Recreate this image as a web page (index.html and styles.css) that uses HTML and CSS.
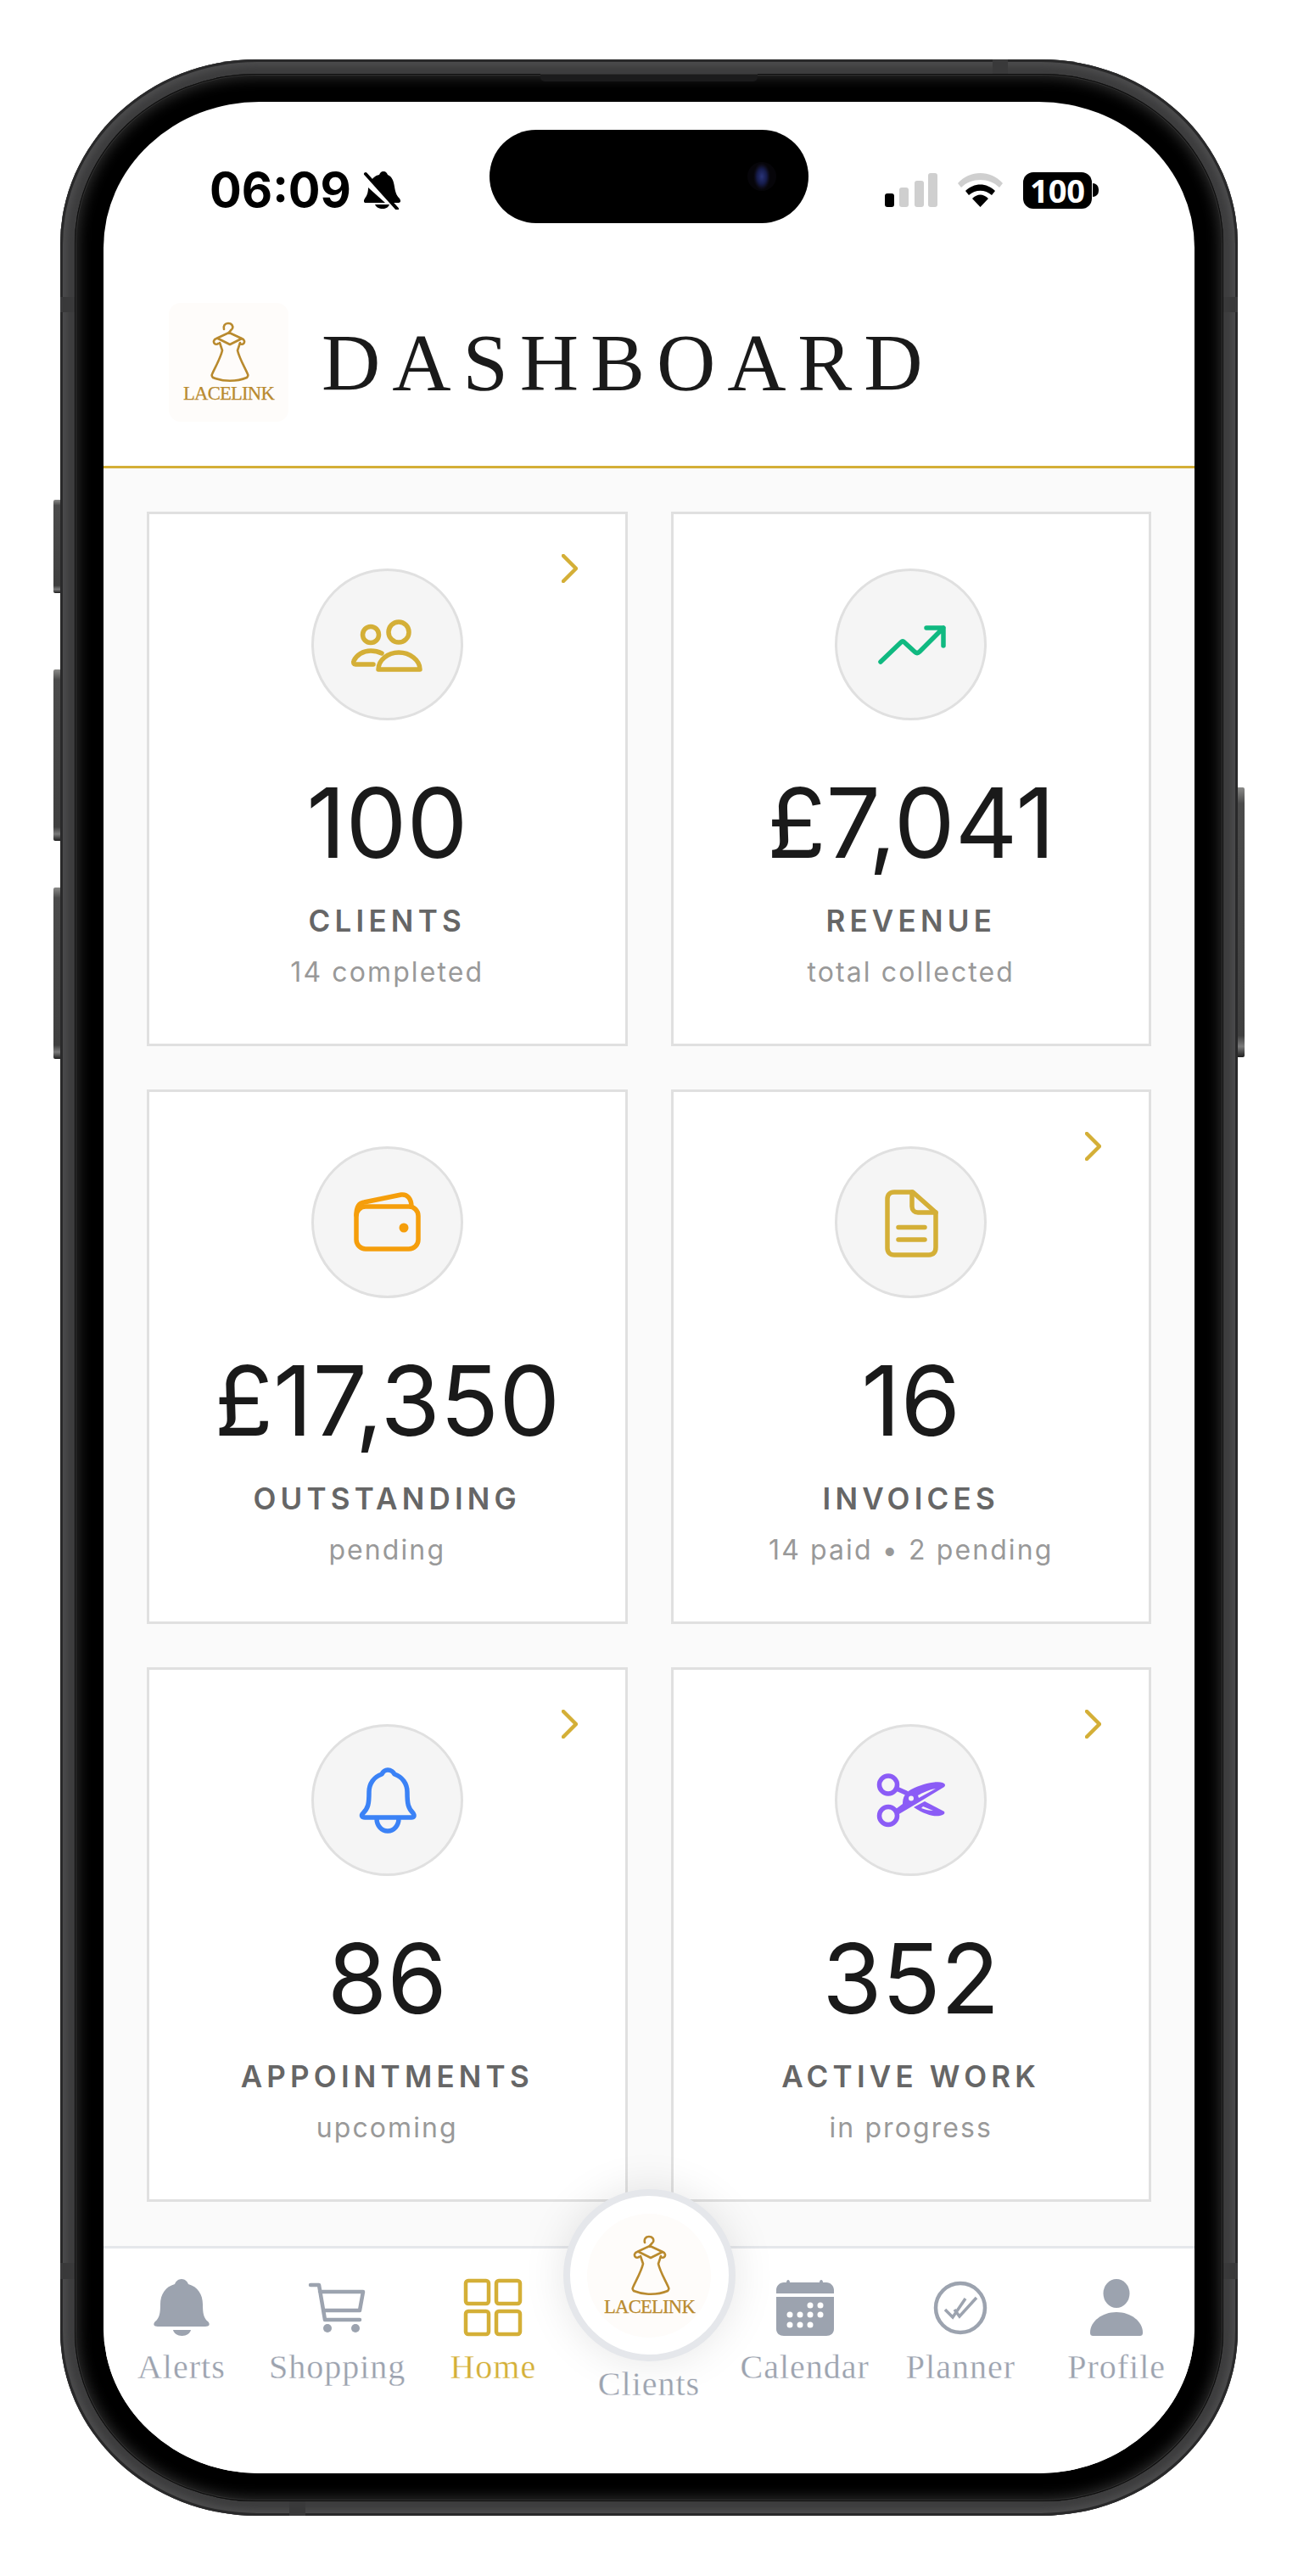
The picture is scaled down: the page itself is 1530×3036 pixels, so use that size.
FILE: index.html
```html
<!DOCTYPE html>
<html lang="en">
<head>
<meta charset="utf-8">
<title>Dashboard</title>
<link rel="stylesheet" href="styles.css">
</head>
<body>
<svg class="defs" width="0" height="0" aria-hidden="true">
  <symbol id="lace" viewBox="0 0 141 140">
    <g class="dress">
      <path d="M65 31c-1-4 1-7 5-7s6 3 5 6c-1 2-4 3-4 6"/>
      <path d="M71 35L56 42c-3 1-4 4-2 6 1 1 3 1 4 0M71 35l15 7c3 1 4 4 2 6-1 1-3 1-4 0"/>
      <path d="M58 42l14 7 14-7M60 47l3 9c-2 9-8 19-12 28-1 2 0 3 1 4 12 5 28 5 40 0 1-1 2-2 1-4-4-9-10-19-12-28l3-9"/>
    </g>
  </symbol>
  <symbol id="chev" viewBox="0 0 19 34">
    <path class="stroke-gold" d="M2 2l15 15L2 32"/>
  </symbol>
</svg>

<main class="stage">
  <div class="phone">
    <span class="btn btn-a"></span><span class="btn btn-b"></span><span class="btn btn-c"></span><span class="btn btn-r"></span>
    <span class="band band-top"></span><span class="band band-bottom"></span>
    <span class="band band-lt"></span><span class="band band-rt"></span><span class="band band-lb"></span><span class="band band-rb"></span>
    <span class="speaker"></span>
    <div class="bezel">
      <div class="screen">
        <div class="island"><span class="camera"></span></div>

        <div class="status">
          <div class="status-left">
            <span class="time">06:09</span>
            <svg class="muted" width="44" height="46" viewBox="0 0 44 46">
              <path class="fill-black" d="M24 1c-3 0-4 2-5 4-5 1-8 4-10 8l24 25h9c2 0 3-2 1-5-4-4-5-8-6-14-1-7-3-12-8-14-1-2-2-4-5-4zM6 20c0 7-2 10-4 13-2 3-1 5 1 5h23zM14 40c1 3 5 5 9 5s7-2 8-5z"/>
              <path class="stroke-black" d="M3 4l37 41"/>
            </svg>
          </div>
          <div class="status-right">
            <svg width="62" height="40" viewBox="0 0 62 40">
              <rect class="fill-black" x="0" y="24" width="11" height="16" rx="3"/>
              <rect class="fill-off" x="17" y="17" width="11" height="23" rx="3"/>
              <rect class="fill-off" x="35" y="9" width="11" height="31" rx="3"/>
              <rect class="fill-off" x="51" y="0" width="11" height="40" rx="3"/>
            </svg>
            <svg width="53" height="40" viewBox="0 0 53 40">
              <path class="fill-off" d="M0 12C14-4 39-4 53 12l-4 5C37 5 16 5 4 17z"/>
              <path class="fill-black" d="M9 21c10-10 25-10 35 0l-4 5c-8-7-19-7-27 0zM17 30c6-6 13-6 19 0L26.500 40z"/>
            </svg>
            <div class="battery"><span class="battery-level">100</span><span class="battery-cap"></span></div>
          </div>
        </div>

        <header class="header">
          <svg class="logo-tile" viewBox="0 0 141 140"><use href="#lace"/><text class="lace-word" x="70.5" y="114" text-anchor="middle">LACELINK</text></svg>
          <h1 class="title">DASHBOARD</h1>
        </header>

        <section class="grid">
          <article class="card">
            <svg class="chev"><use href="#chev"/></svg>
            <div class="disc">
              <svg class="glyph gold" viewBox="-50 -50 100 100">
                <circle cx="-19" cy="-12" r="9.500"/><circle cx="14" cy="-15" r="12"/>
                <path d="M-10 29C-10 18 1 9 14 9C27 9 39 18 39 29Z"/>
                <path d="M-16 23H-37C-39 23-40 21-39 19C-36 12-28 7-19 7C-14 7-10 8-6 10"/>
              </svg>
            </div>
            <div class="value">100</div>
            <div class="label">CLIENTS</div>
            <div class="sub">14 completed</div>
          </article>

          <article class="card">
            <div class="disc">
              <svg class="glyph green" viewBox="-50 -50 100 100">
                <path d="M-36 20L-12-3Q-10-5-8-3L4 8Q7 11 10 8L38-20M18-20H38V1"/>
              </svg>
            </div>
            <div class="value">£7,041</div>
            <div class="label">REVENUE</div>
            <div class="sub">total collected</div>
          </article>

          <article class="card">
            <div class="disc">
              <svg class="glyph amber" viewBox="-50 -50 100 100">
                <rect x="-36" y="-19" width="73" height="50" rx="11"/>
                <path d="M-36-9C-36-18-33-23-27-24L17-33C24-34 29-28 29-19"/>
                <circle class="dot-amber" cx="20" cy="6" r="5.500"/>
              </svg>
            </div>
            <div class="value">£17,350</div>
            <div class="label">OUTSTANDING</div>
            <div class="sub">pending</div>
          </article>

          <article class="card">
            <svg class="chev"><use href="#chev"/></svg>
            <div class="disc">
              <svg class="glyph gold" viewBox="-50 -50 100 100">
                <path d="M-20-36H2L29-12V29C29 35 26 38 21 38H-20C-25 38-28 35-28 30V-28C-28-33-25-36-20-36Z"/>
                <path d="M1-36V-19C1-15 4-12 8-12H29M-15 5.500H16M-15 20H16"/>
              </svg>
            </div>
            <div class="value">16</div>
            <div class="label">INVOICES</div>
            <div class="sub">14 paid • 2 pending</div>
          </article>

          <article class="card">
            <svg class="chev"><use href="#chev"/></svg>
            <div class="disc">
              <svg class="glyph blue" viewBox="-50 -50 100 100">
                <path d="M1-36C-3-36-5-33-6-31C-15-28-21-20-21-10C-21 4-22 9-28 15C-31 18-29 20-26 20H29C32 20 33 18 31 15C25 9 24 4 24-10C24-20 18-28 9-31C8-33 5-36 1-36Z"/>
                <path d="M-12 21C-12 30-6 36 1 36C8 36 14 30 14 21"/>
              </svg>
            </div>
            <div class="value">86</div>
            <div class="label">APPOINTMENTS</div>
            <div class="sub">upcoming</div>
          </article>

          <article class="card">
            <svg class="chev"><use href="#chev"/></svg>
            <div class="disc">
              <svg class="glyph violet" viewBox="-50 -50 100 100">
                <circle cx="-27" cy="-18.500" r="10.500"/><circle cx="-27" cy="18" r="10.500"/>
                <path d="M-15-13L-6-9"/>
                <path class="solid-violet" d="M-18 10L-10 4C-10-3-8-10 4-15C16-20 30-23 37-21C40-20 41-18 39-16L6 4L-16 17Z"/>
                <path class="solid-violet" d="M3 8L16 1L39 13C40 15 39 16 37 17C30 20 18 18 3 8Z"/>
                <path class="solid-soft" d="M8-6C15-10 22-13 29-14L9-3Z"/>
                <path class="solid-soft" d="M14 7L26 12C21 12 17 11 12 9Z"/>
                <circle class="solid-soft" cx="0" cy="-2.500" r="3"/>
              </svg>
            </div>
            <div class="value">352</div>
            <div class="label">ACTIVE WORK</div>
            <div class="sub">in progress</div>
          </article>
        </section>

        <nav class="nav">
          <div class="nav-item">
            <svg class="nav-icon" viewBox="0 0 68 68">
              <path class="fill-nav" d="M34 0C30 0 27 3 26 6C15 9 9 18 9 30C9 40 8 46 3 50C0 53 1 56 6 56H62C67 56 68 53 65 50C60 46 59 40 59 30C59 18 53 9 42 6C41 3 38 0 34 0Z"/>
              <path class="fill-nav" d="M24 60H45C44 64 40 67 34.500 67C29 67 25 64 24 60Z"/>
            </svg>
            <span class="nav-label">Alerts</span>
          </div>
          <div class="nav-item">
            <svg class="nav-icon" viewBox="0 0 68 68">
              <path class="stroke-nav" d="M2 7H12L19 48H60M13 15H64L60 37H17"/>
              <circle class="fill-nav" cx="22" cy="58" r="5"/><circle class="fill-nav" cx="55" cy="58" r="5"/>
            </svg>
            <span class="nav-label">Shopping</span>
          </div>
          <div class="nav-item is-active">
            <svg class="nav-icon" viewBox="0 0 68 68">
              <rect class="stroke-home" x="2" y="2" width="27" height="27" rx="3"/>
              <rect class="stroke-home" x="38" y="2" width="28" height="27" rx="3"/>
              <rect class="stroke-home" x="2" y="38" width="27" height="27" rx="3"/>
              <rect class="stroke-home" x="38" y="38" width="28" height="27" rx="3"/>
            </svg>
            <span class="nav-label">Home</span>
          </div>
          <div class="nav-item nav-center">
            <div class="fab"><div class="fab-inner"><svg class="logo-fab" viewBox="0 0 141 140"><use href="#lace"/><text class="lace-word" x="70.5" y="114" text-anchor="middle">LACELINK</text></svg></div></div>
            <span class="nav-label nav-label-center">Clients</span>
          </div>
          <div class="nav-item">
            <svg class="nav-icon" viewBox="0 0 68 68">
              <path class="fill-nav" d="M12 4C12 0 16 0 16 4H51C51 0 55 0 55 4H59C64 4 68 8 68 13V17H0V13C0 8 4 4 9 4ZM0 21H68V59C68 64 64 67 59 67H9C4 67 0 64 0 59Z"/>
              <g class="fill-white">
                <circle cx="40" cy="31" r="3.500"/><circle cx="52" cy="31" r="3.500"/>
                <circle cx="16" cy="42" r="3.500"/><circle cx="28" cy="42" r="3.500"/><circle cx="40" cy="42" r="3.500"/><circle cx="52" cy="42" r="3.500"/>
                <circle cx="16" cy="54" r="3.500"/><circle cx="28" cy="54" r="3.500"/><circle cx="40" cy="54" r="3.500"/>
              </g>
            </svg>
            <span class="nav-label">Calendar</span>
          </div>
          <div class="nav-item">
            <svg class="nav-icon" viewBox="0 0 68 68">
              <circle class="stroke-nav" cx="34" cy="34" r="29"/>
              <path class="stroke-check" d="M16 36L25 45L40 23M27 36L33 44L53 22"/>
            </svg>
            <span class="nav-label">Planner</span>
          </div>
          <div class="nav-item">
            <svg class="nav-icon" viewBox="0 0 68 68">
              <ellipse class="fill-nav" cx="34" cy="17" rx="15.500" ry="17"/>
              <path class="fill-nav" d="M34 39C17 39 3 50 3 63C3 66 4 67 7 67H61C64 67 65 66 65 63C65 50 51 39 34 39Z"/>
            </svg>
            <span class="nav-label">Profile</span>
          </div>
        </nav>
      </div>
    </div>
  </div>
</main>
</body>
</html>
```
FILE: styles.css
```css
* { box-sizing: border-box; }
html, body { margin: 0; background: #fff; }
body { height: 3036px; overflow: hidden; font-family: "Inter", "Liberation Sans", sans-serif; }
.defs { position: absolute; }

.stage { padding: 70px 0 0 71px; }

.phone {
  position: relative;
  width: 1388px;
  height: 2895px;
  padding: 17px;
  border-radius: 232px / 218px;
  background: #3d3d3e;
  box-shadow: inset 0 0 0 3px #29292a, inset 0 0 6px 8px #4b4b4c;
}
.bezel {
  height: 100%;
  padding: 33px 34px;
  border-radius: 214px / 200px;
  background: #000;
  box-shadow: inset 0 0 0 1px #0c0c0c, inset 0 0 0 2px #2f2f2f, inset 0 0 16px 4px #303030;
}
.screen {
  position: relative;
  display: flex;
  flex-direction: column;
  height: 100%;
  overflow: hidden;
  border-radius: 184px / 172px;
  background: #fff;
}

.btn { position: absolute; width: 8px; border-radius: 2px 0 0 2px; background: linear-gradient(180deg, #8a8a88 0, #4b4b4b 6%, #3f3f3f 92%, #7a7a7a 96%, #1f1f1f 100%); }
.btn-a { left: -8px; top: 519px; height: 110px; }
.btn-b { left: -8px; top: 719px; height: 202px; }
.btn-c { left: -8px; top: 976px; height: 202px; }
.btn-r { right: -8px; top: 858px; height: 318px; border-radius: 0 2px 2px 0; }

.band { position: absolute; background: #39393a; }
.band-top { top: 0; left: 1099px; width: 18px; height: 17px; }
.band-bottom { bottom: 0; left: 270px; width: 19px; height: 17px; }
.band-lt { left: 0; top: 280px; width: 17px; height: 18px; }
.band-rt { right: 0; top: 280px; width: 17px; height: 18px; }
.band-lb { left: 0; top: 2597px; width: 17px; height: 19px; }
.band-rb { right: 0; top: 2597px; width: 17px; height: 19px; }
.speaker { position: absolute; z-index: 1; top: 17px; left: 566px; width: 256px; height: 9px; border-radius: 0 0 5px 5px; background: #1b1b1c; border-top: 1px solid #2d2d2d; }

.island { position: absolute; z-index: 3; top: 33px; left: 50%; width: 376px; height: 110px; margin-left: -188px; border-radius: 55px; background: #000; }
.camera { position: absolute; left: 304px; top: 38px; width: 34px; height: 34px; border-radius: 50%; background: radial-gradient(ellipse 10px 16px, #2a3478 0, #161c4c 55%, #0c0b18 85%, #060509 100%); }

.status { display: flex; flex: none; justify-content: space-between; align-items: center; height: 208px; padding: 0 113px 0 125px; }
.status-left, .status-right { display: flex; align-items: center; }
.status-left { gap: 14px; }
.status-right { gap: 24px; }
.time { font-size: 56px; font-weight: 700; line-height: 60px; color: #000; }
.fill-black { fill: #000; }
.fill-off { fill: #cfcfcf; }
.stroke-black { fill: none; stroke: #000; stroke-width: 4; stroke-linecap: round; }
.battery { display: flex; align-items: center; }
.battery-level { display: flex; justify-content: center; align-items: center; width: 81px; height: 43px; border-radius: 12px; background: #000; color: #fff; font-size: 38px; font-weight: 700; font-family: "Open Sans", "Inter", sans-serif; }
.battery-cap { width: 7px; height: 16px; margin-left: 1px; border-radius: 0 8px 8px 0; background: #000; }

.header { display: flex; flex: none; align-items: center; gap: 39px; padding: 29px 0 52px 77px; border-bottom: 3px solid #d4af37; }
.logo-tile { display: block; width: 141px; height: 140px; border-radius: 14px; background: #fefcfa; }
.title { margin: 2px 0 0; font-family: "Liberation Serif", serif; font-size: 96px; font-weight: 400; line-height: 110px; letter-spacing: 13.9px; color: #1a1a1a; }

.dress { fill: none; stroke: #b98a2e; stroke-width: 2.600; stroke-linecap: round; stroke-linejoin: round; }
.lace-word { fill: #b98a2e; stroke: #b98a2e; stroke-width: 0.25px; font-family: "Liberation Serif", serif; font-size: 22.700px; letter-spacing: -0.8px; }

.grid { display: grid; flex: 1; grid-template-columns: 1fr 1fr; grid-auto-rows: 630px; gap: 51px; padding: 51px; background: #fafafa; }
.card { position: relative; display: flex; flex-direction: column; align-items: center; padding-top: 64px; border: 3px solid #e0e0e0; background: #fff; }
.chev { position: absolute; top: 47px; right: 56px; width: 19px; height: 34px; }
.stroke-gold { fill: none; stroke: #d4af37; stroke-width: 4.500; stroke-linecap: round; stroke-linejoin: round; }
.disc { display: flex; flex: none; justify-content: center; align-items: center; width: 179px; height: 179px; border: 3px solid #e0e0e0; border-radius: 50%; background: #f5f5f5; }
.glyph { display: block; width: 100px; height: 100px; fill: none; stroke-width: 5.500; stroke-linecap: round; stroke-linejoin: round; }
.gold { stroke: #d4af37; }
.green { stroke: #10b981; }
.amber { stroke: #f59e0b; }
.blue { stroke: #3b82f6; }
.violet { stroke: #8b5cf6; }
.dot-amber { fill: #f59e0b; stroke: none; }
.solid-violet { fill: #8b5cf6; stroke: none; }
.solid-soft { fill: #f5f5f5; stroke: none; }

.value { margin-top: 61px; font-size: 114px; font-weight: 400; line-height: 120px; color: #1a1a1a; white-space: nowrap; }
.label { margin-top: 33px; font-size: 35px; font-weight: 600; line-height: 44px; letter-spacing: 5.200px; color: #666; white-space: nowrap; }
.sub { margin-top: 19px; font-size: 32px; font-weight: 400; line-height: 40px; letter-spacing: 2.100px; color: #999; white-space: nowrap; }

.nav { position: relative; z-index: 2; display: flex; flex: none; height: 268px; border-top: 3px solid #e5e7eb; background: #fff; }
.nav-item { display: flex; flex: 1 1 0; flex-direction: column; align-items: center; min-width: 0; padding-top: 36px; }
.nav-icon { display: block; flex: none; width: 68px; height: 68px; overflow: visible; }
.nav-label { margin-top: 12px; font-family: "Liberation Serif", serif; font-size: 40px; line-height: 48px; letter-spacing: 1px; color: #9ca3af; -webkit-text-stroke: 0.3px #fff; paint-order: fill stroke; white-space: nowrap; }
.is-active .nav-label { color: #d4af37; }
.nav-center { margin-top: -70px; padding-top: 0; }
.nav-label-center { margin-top: 3px; }
.fab { display: flex; flex: none; justify-content: center; align-items: center; width: 203px; height: 203px; border: 8px solid #e5e7eb; border-radius: 50%; background: #fff; box-shadow: 0 0 50px rgba(0, 0, 0, 0.1); }
.fab-inner { display: flex; justify-content: center; align-items: center; width: 146px; height: 146px; border-radius: 50%; background: #fefcfa; }
.logo-fab { display: block; width: 141px; height: 140px; }
.fill-nav { fill: #9ca3af; }
.fill-white { fill: #fff; }
.stroke-nav { fill: none; stroke: #9ca3af; stroke-width: 4.500; stroke-linecap: round; stroke-linejoin: round; }
.stroke-check { fill: none; stroke: #9ca3af; stroke-width: 3.500; stroke-linejoin: miter; }
.stroke-home { fill: none; stroke: #d4af37; stroke-width: 4.500; }
```
